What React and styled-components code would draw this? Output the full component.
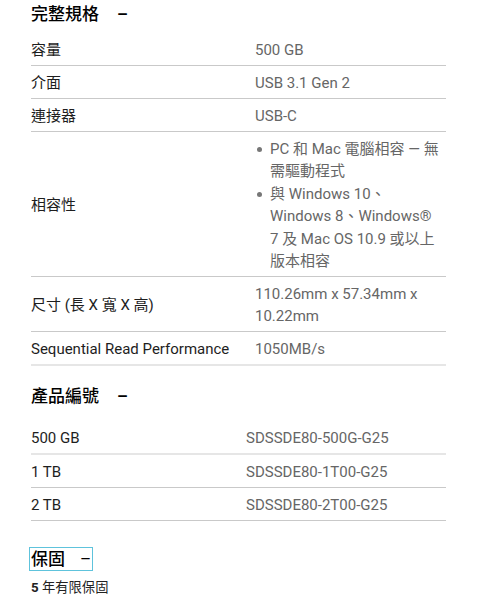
import styled, { createGlobalStyle } from "styled-components";

const GlobalStyle = createGlobalStyle`
  html, body {
    margin: 0;
    padding: 0;
    background: #fff;
  }
  body {
    font-family: Roboto, "Noto Sans CJK TC", sans-serif;
    color: #222;
  }
`

const Page = styled.div`
  width: 415px;
  padding: 2px 0 0 31px;
`

const SectionTitle = styled.h3`
  display: flex;
  align-items: center;
  margin: ${(props) => props.mt || 0}px 0 ${(props) => props.mb || 0}px;
  font-size: 17px;
  line-height: 24px;
  font-weight: 500;
  color: #000;
`

const Toggle = styled.span`
  margin-left: ${(props) => props.thin ? 15 : 18}px;
  font-weight: ${(props) => props.thin ? 400 : 700};
`

const FocusTitle = styled(SectionTitle)`
  display: inline-flex;
  outline: 1px solid #5ec3dc;
  padding: 0 1px 0 1px;
  margin-left: -1px;
  line-height: 22px;
  height: 22px;
`

const Table = styled.table`
  width: 100%;
  border-collapse: collapse;
`

const Row = styled.tr`
  border-bottom: ${(props) => props.light ? '2px solid #e6e6e6' : '1px solid #c9c9c9'};
`

const Label = styled.td`
  width: ${(props) => props.w || 224}px;
  padding: 6px 0 4px;
  font-size: 15px;
  line-height: 22px;
  color: #1e1e1e;
  vertical-align: middle;
`

const Value = styled.td`
  padding: 6px 0 4px;
  font-size: 15px;
  line-height: 22px;
  color: #666;
  vertical-align: middle;
`

const ValueText = styled.div`
  width: 185px;
`

const BulletList = styled.ul`
  margin: 0;
  padding: 0;
  list-style: none;
  width: 188px;
  line-height: 22.4px;
`

const Bullet = styled.li`
  position: relative;
  padding-left: 15px;

  &::before {
    content: "";
    position: absolute;
    left: 2px;
    top: 9px;
    width: 5px;
    height: 5px;
    border-radius: 50%;
    background: #777;
  }
`

const Note = styled.p`
  margin: 8px 0 0;
  font-size: 13.3px;
  line-height: 20px;
  font-weight: 400;
  color: #222;
`

const Strong = styled.span`
  font-weight: 700;
`

const specs = [
  ['容量', '500 GB'],
  ['介面', 'USB 3.1 Gen 2'],
  ['連接器', 'USB-C'],
]

const models = [
  ['500 GB', 'SDSSDE80-500G-G25', true],
  ['1 TB', 'SDSSDE80-1T00-G25'],
  ['2 TB', 'SDSSDE80-2T00-G25'],
]

export default function App() {
  return (
    <>
      <GlobalStyle />
      <Page>
        <SectionTitle mb={7}>完整規格<Toggle>–</Toggle></SectionTitle>
        <Table>
          <tbody>
            {specs.map(([k, v]) => (
              <Row key={k}>
                <Label>{k}</Label>
                <Value>{v}</Value>
              </Row>
            ))}
            <Row>
              <Label>相容性</Label>
              <Value>
                <BulletList>
                  <Bullet>PC 和 Mac 電腦相容 — 無需驅動程式</Bullet>
                  <Bullet>與 Windows 10、Windows 8、Windows® 7 及 Mac OS 10.9 或以上版本相容</Bullet>
                </BulletList>
              </Value>
            </Row>
            <Row>
              <Label>尺寸 (長 X 寬 X 高)</Label>
              <Value><ValueText>110.26mm x 57.34mm x 10.22mm</ValueText></Value>
            </Row>
            <Row light>
              <Label>Sequential Read Performance</Label>
              <Value>1050MB/s</Value>
            </Row>
          </tbody>
        </Table>

        <SectionTitle mt={18} mb={13}>產品編號<Toggle>–</Toggle></SectionTitle>
        <Table>
          <tbody>
            {models.map(([k, v, light]) => (
              <Row key={k} light={light}>
                <Label w={215}>{k}</Label>
                <Value>{v}</Value>
              </Row>
            ))}
          </tbody>
        </Table>

        <FocusTitle as="div" mt={27}>保固<Toggle thin>–</Toggle></FocusTitle>
        <Note><Strong>5</Strong> 年有限保固</Note>
      </Page>
    </>
  )
}
